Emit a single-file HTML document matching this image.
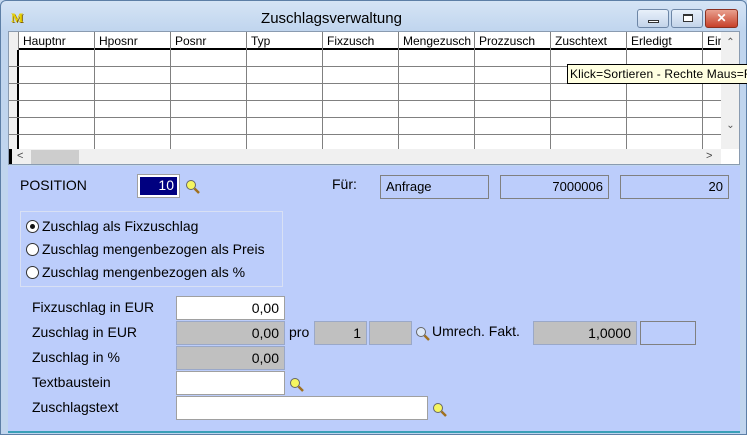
<!DOCTYPE html>
<html><head><meta charset="utf-8"><style>
*{box-sizing:border-box;margin:0;padding:0}
body{width:747px;height:435px;overflow:hidden;background:#c4d8ef;font-family:"Liberation Sans",Arial,sans-serif;font-size:13px;color:#000;position:relative}
.a{position:absolute}
.win{left:0;top:0;width:747px;height:435px;border:1px solid #5d7fa6;border-radius:6px 6px 0 0;background:linear-gradient(#d5e4f5,#c0d5ee 30px)}
.title{left:0;width:663px;top:10px;text-align:center;font-size:15px;color:#000}
.btn{top:9px;height:19px;border:1px solid #6d86a6;border-radius:3px;background:linear-gradient(#e8f0fa,#c3d4ea)}
.grid{left:8px;top:31px;width:732px;height:134px;background:#fff;border:1px solid #8a9bb0;overflow:hidden}
.hdr{top:0;height:18px;left:0;width:712px;background:#fff;border-bottom:2px solid #000}
.hc{position:absolute;top:2px;font-size:12px}
.vl{position:absolute;top:0;width:1px;height:117px;background:#808080}
.hl{position:absolute;left:0;width:712px;height:1px;background:#808080}
.panel{left:8px;top:166px;width:732px;height:267px;background:#bccdfb;border-bottom:2px solid #3aa0b8}
.box{position:absolute;border:1px solid #808080;font-size:13px;padding:3px 5px 0;height:24px}
.w{background:#fff;border-color:#a0a0a0;text-align:right}
.g{background:#c0c0c0;border-color:#9aa8c8;text-align:right}
.lbl{position:absolute;font-size:14px}
.mag{position:absolute;width:16px;height:16px}
.rad{position:absolute;width:13px;height:13px;border:1px solid #333;border-radius:50%;background:#fff}
</style></head><body>
<div class="a win"></div>
<div class="a" style="left:11px;top:10px;font:bold 13px 'Liberation Serif',serif;color:#e8d000;text-shadow:1px 1px 0 #806000">M</div>
<div class="a title">Zuschlagsverwaltung</div>
<div class="a btn" style="left:637px;width:32px"><div class="a" style="left:10px;top:10px;width:11px;height:3px;border:1px solid #333;background:#fff"></div></div>
<div class="a btn" style="left:671px;width:32px"><div class="a" style="left:11px;top:4px;width:10px;height:8px;border:1px solid #333;border-top-width:2px;background:#fff"></div></div>
<div class="a btn" style="left:705px;width:33px;background:linear-gradient(#e9a08f,#c7412a);border-color:#8a3020;color:#fff;font-weight:bold;text-align:center;font-size:12px;line-height:17px">✕</div>

<div class="a grid">
 <div class="a hdr">
  <div class="a" style="left:0;top:0;width:10px;height:18px;background:#f0f0f0;border-right:1px solid #888"></div>
  <span class="hc" style="left:14px">Hauptnr</span><span class="hc" style="left:90px">Hposnr</span><span class="hc" style="left:166px">Posnr</span><span class="hc" style="left:242px">Typ</span><span class="hc" style="left:318px">Fixzusch</span><span class="hc" style="left:394px">Mengezusch</span><span class="hc" style="left:470px">Prozzusch</span><span class="hc" style="left:546px">Zuschtext</span><span class="hc" style="left:622px">Erledigt</span><span class="hc" style="left:698px">Ein</span>
  <div class="a" style="left:542px;top:0;width:76px;height:17px;background:#eef4fc;z-index:-1"></div>
 </div>
 <div class="a" style="left:0;top:18px;width:10px;height:99px;background:#f0f0f0;border-right:2px solid #000"></div>
 <div class="vl" style="left:85px"></div><div class="vl" style="left:161px"></div><div class="vl" style="left:237px"></div><div class="vl" style="left:313px"></div><div class="vl" style="left:389px"></div><div class="vl" style="left:465px"></div><div class="vl" style="left:541px"></div><div class="vl" style="left:617px"></div><div class="vl" style="left:693px"></div>
 <div class="hl" style="top:34px"></div><div class="hl" style="top:51px"></div><div class="hl" style="top:68px"></div><div class="hl" style="top:85px"></div><div class="hl" style="top:102px"></div>
 <div class="a" style="left:712px;top:0;width:19px;height:117px;background:#f0f0f0;color:#555;font-size:10px;text-align:center"><div style="margin-top:5px">⌃</div><div style="margin-top:72px">⌄</div></div>
 <div class="a" style="left:0;top:117px;width:712px;height:16px;background:#f0f0f0"><div class="a" style="left:0;top:0;width:3px;height:16px;background:#000"></div><div class="a" style="left:8px;top:1px;font-size:11px;color:#444">&lt;</div><div class="a" style="left:22px;top:1px;width:48px;height:14px;background:#cdcdcd"></div><div class="a" style="left:697px;top:1px;font-size:11px;color:#444">&gt;</div></div>
</div>
<div class="a" style="left:567px;top:64px;width:182px;height:20px;background:#ffffe1;border:1px solid #000;font-size:12px;letter-spacing:0.15px;padding:2px 2px;white-space:nowrap;overflow:hidden">Klick=Sortieren - Rechte Maus=Fi</div>

<div class="a panel"></div>
<div class="lbl" style="left:20px;top:177px">POSITION</div>
<div class="box" style="left:137px;top:174px;width:43px;height:24px;background:#fff;border-color:#a0a0a0;padding:2px"><div style="background:#000080;color:#fff;text-align:right;height:18px;padding-right:3px;font-size:14px">10</div></div>
<svg class="mag" style="left:185px;top:179px" viewBox="0 0 16 16"><circle cx="6" cy="6" r="4.5" fill="#f5f560" stroke="#666"/><path d="M9.5 9.5 14 14" stroke="#a07020" stroke-width="2.5"/></svg>
<div class="lbl" style="left:332px;top:176px">Für:</div>
<div class="box" style="left:380px;top:175px;width:109px;text-align:left">Anfrage</div>
<div class="box" style="left:500px;top:175px;width:109px;text-align:right">7000006</div>
<div class="box" style="left:620px;top:175px;width:109px;text-align:right">20</div>

<div class="a" style="left:20px;top:211px;width:263px;height:76px;border:1px solid #d8e0f4"></div>
<div class="rad" style="left:26px;top:220px"><div class="a" style="left:3px;top:3px;width:5px;height:5px;border-radius:50%;background:#111"></div></div>
<div class="rad" style="left:26px;top:243px"></div>
<div class="rad" style="left:26px;top:266px"></div>
<div class="lbl" style="left:42px;top:218px">Zuschlag als Fixzuschlag</div>
<div class="lbl" style="left:42px;top:241px">Zuschlag mengenbezogen als Preis</div>
<div class="lbl" style="left:42px;top:264px">Zuschlag mengenbezogen als %</div>

<div class="lbl" style="left:32px;top:299px">Fixzuschlag in EUR</div>
<div class="lbl" style="left:32px;top:324px">Zuschlag in EUR</div>
<div class="lbl" style="left:32px;top:349px">Zuschlag in %</div>
<div class="lbl" style="left:32px;top:374px">Textbaustein</div>
<div class="lbl" style="left:32px;top:399px">Zuschlagstext</div>
<div class="box w" style="left:176px;top:296px;width:109px;font-size:14px">0,00</div>
<div class="box g" style="left:176px;top:321px;width:109px;font-size:14px">0,00</div>
<div class="box g" style="left:176px;top:346px;width:109px;font-size:14px">0,00</div>
<div class="box w" style="left:176px;top:371px;width:109px"></div>
<div class="box w" style="left:176px;top:396px;width:252px"></div>
<svg class="mag" style="left:289px;top:377px" viewBox="0 0 16 16"><circle cx="6" cy="6" r="4.5" fill="#f5f560" stroke="#666"/><path d="M9.5 9.5 14 14" stroke="#a07020" stroke-width="2.5"/></svg>
<svg class="mag" style="left:432px;top:402px" viewBox="0 0 16 16"><circle cx="6" cy="6" r="4.5" fill="#f5f560" stroke="#666"/><path d="M9.5 9.5 14 14" stroke="#a07020" stroke-width="2.5"/></svg>
<div class="lbl" style="left:289px;top:324px">pro</div>
<div class="box g" style="left:314px;top:321px;width:53px;font-size:14px">1</div>
<div class="box g" style="left:369px;top:321px;width:43px"></div>
<svg class="mag" style="left:415px;top:326px" viewBox="0 0 16 16"><circle cx="6" cy="6" r="4.5" fill="#dde8f8" stroke="#666"/><path d="M9.5 9.5 14 14" stroke="#a07020" stroke-width="2.5"/></svg>
<div class="lbl" style="left:432px;top:323px">Umrech. Fakt.</div>
<div class="box g" style="left:533px;top:321px;width:104px;font-size:14px">1,0000</div>
<div class="box" style="left:640px;top:321px;width:56px"></div>
</body></html>
